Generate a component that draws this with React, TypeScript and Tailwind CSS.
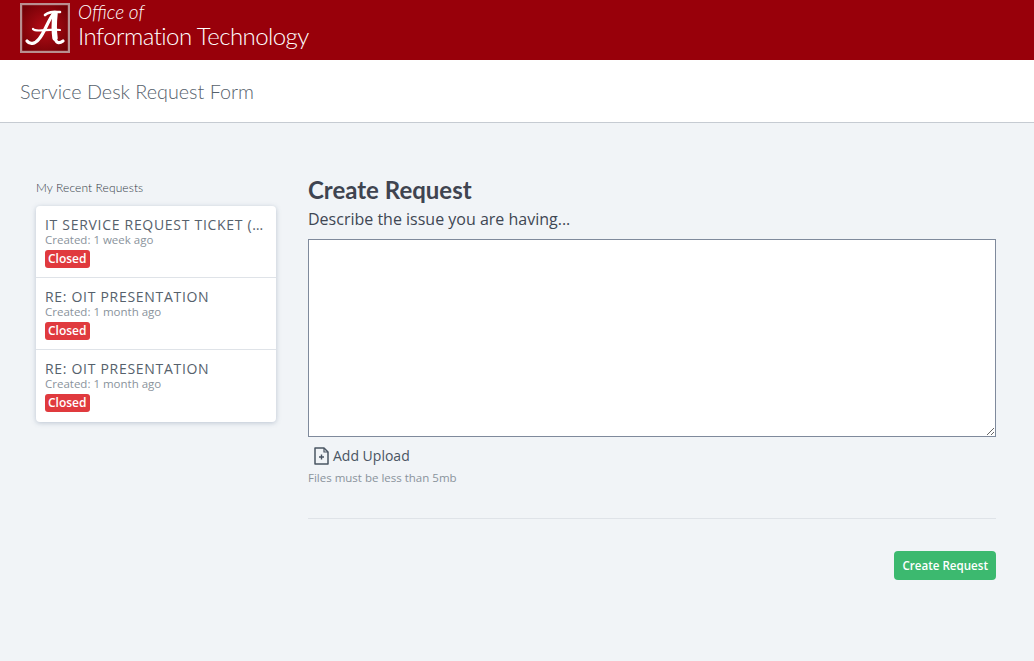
const requests = [
  { title: 'IT SERVICE REQUEST TICKET (#1042)', created: 'Created: 1 week ago' },
  { title: 'RE: OIT PRESENTATION', created: 'Created: 1 month ago' },
  { title: 'RE: OIT PRESENTATION', created: 'Created: 1 month ago' },
];

function Logo() {
  return (
    <svg width="50" height="50" viewBox="0 0 50 50" className="shrink-0">
      <defs>
        <radialGradient id="logoBg" cx="50%" cy="50%" r="65%">
          <stop offset="0%" stopColor="#b50c16" />
          <stop offset="100%" stopColor="#6e0005" />
        </radialGradient>
      </defs>
      <rect x="1" y="1" width="48" height="48" fill="url(#logoBg)" stroke="#b98f90" strokeWidth="2.4" />
      <g fill="none" stroke="#fff" strokeLinecap="round" strokeLinejoin="round">
        <path d="M34 10 C28 17 25 29 19 36 C15 41 10 42 7 38" strokeWidth="3.2" />
        <path d="M25 12 C29 8 34 9 40 9" strokeWidth="2.6" />
        <path d="M35 11 C34 20 34 28 35 35" strokeWidth="5.4" />
        <path d="M35 35 C36 40 39 41 43 38" strokeWidth="3.2" />
        <path d="M13 26 C16 30 30 25 40 27" strokeWidth="2.2" />
      </g>
    </svg>
  );
}

function UploadIcon() {
  return (
    <svg width="15" height="18" viewBox="0 0 15 18" className="shrink-0">
      <path d="M1 1h9l4 4v12H1z" fill="none" stroke="#4a5563" strokeWidth="1.5" strokeLinejoin="round" />
      <path d="M10 1v4h4" fill="none" stroke="#4a5563" strokeWidth="1.2" />
      <path d="M7.5 7.5v5M5 10h5" fill="none" stroke="#4a5563" strokeWidth="1.4" />
    </svg>
  );
}

export default function App() {
  return (
    <div className="min-h-[661px] bg-[#f1f4f7] font-['Open_Sans',sans-serif] text-[#3f4753]">
      <header className="flex h-[60px] items-start gap-[8px] bg-[#98000a] pt-[3px] pl-[20px]">
        <Logo />
        <div className="font-['Lato',sans-serif] font-light text-white">
          <div className="h-[18px] text-[19px] leading-[18px] italic">Office of</div>
          <div className="text-[24px] leading-[29px] tracking-[-0.55px] whitespace-nowrap">
            Information Technology
          </div>
        </div>
      </header>

      <div className="flex h-[63px] items-center border-b border-[#c6cbd2] bg-white pt-[2px] pl-[20px]">
        <h1 className="font-['Lato',sans-serif] text-[19.8px] font-light text-[#56616c]">
          Service Desk Request Form
        </h1>
      </div>

      <main className="flex gap-[32px] pt-[50px] pl-[36px]">
        <aside className="w-[240px] shrink-0">
          <h2 className="mt-[6px] mb-[9px] font-['Lato',sans-serif] text-[12px] leading-[18px] font-light tracking-[0.1px] text-[#333b46]">
            My Recent Requests
          </h2>
          <ul className="rounded-[4px] bg-white shadow-[0_1px_5px_rgba(90,110,140,0.35)]">
            {requests.map((request, i) => (
              <li key={i} className="h-[72px] border-b border-[#dfe3e8] px-[9px] pt-[9px] last:border-b-0">
                <div className="truncate text-[14px] leading-[19px] tracking-[0.7px] text-[#56616c]">
                  {request.title}
                </div>
                <div className="text-[11.5px] leading-[12px] text-[#8a939c]">{request.created}</div>
                <span className="mt-[4px] block w-fit rounded-[3px] bg-[#e03a3e] px-[3px] text-[12px] leading-[18px] font-semibold text-white">
                  Closed
                </span>
              </li>
            ))}
          </ul>
        </aside>

        <section className="w-[688px] shrink-0">
          <h2 className="mt-[-1px] font-['Lato',sans-serif] text-[24px] leading-[36px] font-bold text-[#3f4450]">
            Create Request
          </h2>
          <label className="mt-[1px] block text-[16px] leading-[20px] text-[#3f4753]">
            Describe the issue you are having...
          </label>
          <textarea className="mt-[10px] block h-[198px] w-full border border-[#7f8a9c] bg-white" />
          <div className="mt-[9px] flex items-center gap-[4px] pl-[6px] text-[14px] leading-[20px] text-[#4a5563]">
            <UploadIcon />
            <span>Add Upload</span>
          </div>
          <p className="mt-[3px] text-[11.5px] leading-[18px] text-[#8a939c]">Files must be less than 5mb</p>
          <hr className="mt-[31px] border-t border-[#dfe3e8]" />
          <div className="mt-[32px] flex justify-end">
            <button className="h-[29px] rounded-[4px] bg-[#3cb96f] px-[8px] text-[11.6px] font-semibold text-white">
              Create Request
            </button>
          </div>
        </section>
      </main>
    </div>
  );
}
